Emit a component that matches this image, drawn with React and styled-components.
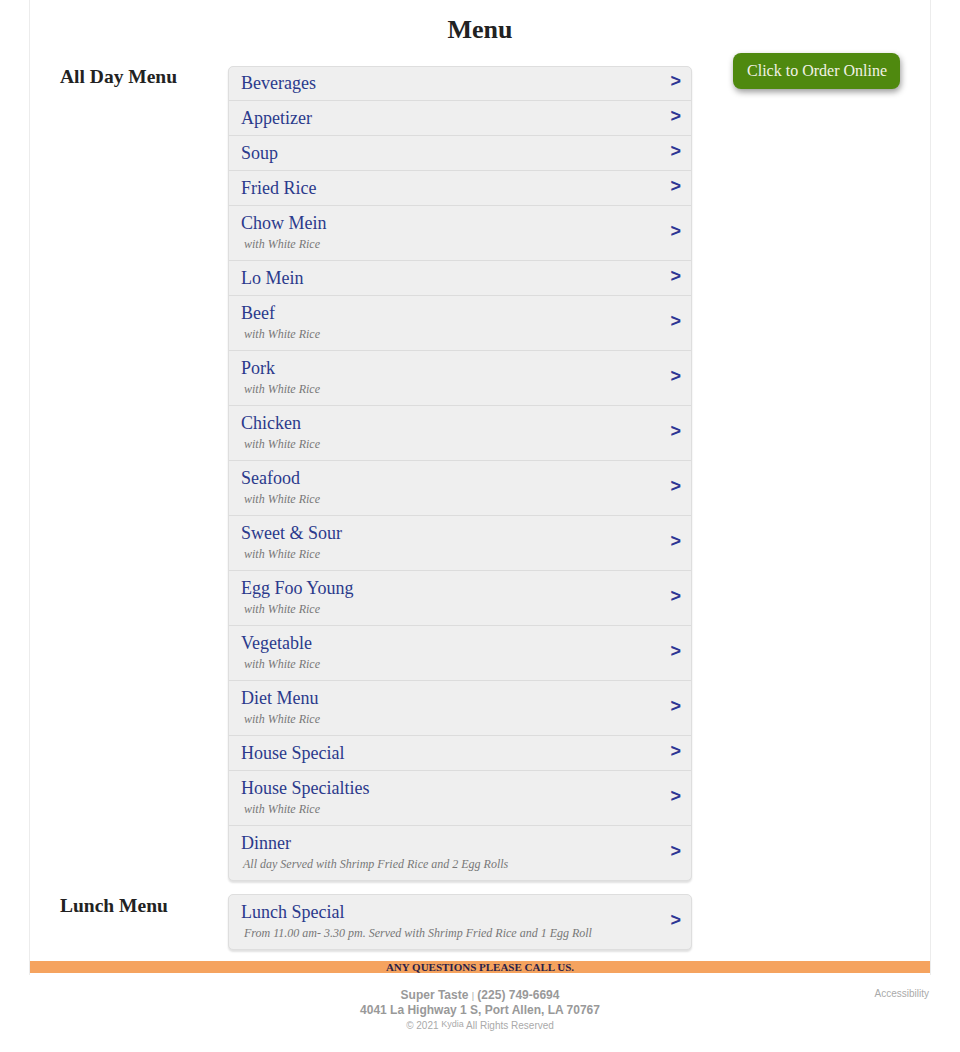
import React from 'react';
import styled, { createGlobalStyle } from 'styled-components';

const GlobalStyle = createGlobalStyle`
    body {
        margin: 0;
        background: #fff;
        font-family: "Liberation Serif", "Times New Roman", serif;
    }
`;

const Page = styled.div`
    width: 960px;
`;

const Container = styled.div`
    width: 900px;
    margin: 0 auto;
    border-left: 1px solid #ececec;
    border-right: 1px solid #ececec;
    padding-bottom: 2px;
`;

const Title = styled.h1`
    margin: 0;
    padding: 15px 0 8px;
    font-size: 26px;
    line-height: 30px;
    font-weight: bold;
    text-align: center;
    color: #222;
`;

const Section = styled.div`
    display: grid;
    grid-template-columns: 168px 464px 1fr;
    padding: 0 30px;
    margin-bottom: ${ p => p.gap || 0 }px;
`;

const Heading = styled.h2`
    margin: ${ p => p.top || 0 }px 0 0;
    font-size: 19.5px;
    line-height: 22px;
    font-weight: bold;
    color: #222;
`;

const List = styled.div`
    margin-top: ${ p => p.top || 0 }px;
    background: #efefef;
    border: 1px solid #dedede;
    border-radius: 5px;
    box-shadow: 0 2px 2px rgba(0, 0, 0, 0.12);
`;

const Row = styled.div`
    display: flex;
    align-items: center;
    padding: 7px 10px 7px 12px;
    border-top: 1px solid #dcdcdc;

    &:first-child {
        border-top: none;
        padding-top: 6px;
    }

    &:only-child {
        padding-top: 7px;
    }
`;

const RowText = styled.div`
    flex: 1;
`;

const Name = styled.div`
    font-size: 18px;
    line-height: 20px;
    color: #2b3a8c;
`;

const Sub = styled.div`
    margin: 4px 0 2px;
    padding-left: ${ p => p.indent || 3 }px;
    font-size: 12px;
    line-height: 14px;
    font-style: italic;
    color: #777;
`;

const Arrow = styled.span`
    font-family: "Liberation Sans", Arial, sans-serif;
    font-weight: bold;
    font-size: 18px;
    line-height: 20px;
    color: #2c3594;
    margin-top: -4px;
`;

const ButtonCell = styled.div`
    display: flex;
    justify-content: flex-end;
    align-items: flex-start;
`;

const OrderButton = styled.button`
    height: 36px;
    padding: 0 13px 0 14px;
    border: none;
    border-radius: 8px;
    background: #4f890f;
    color: #f2f2e6;
    font-family: "Liberation Serif", "Times New Roman", serif;
    font-size: 16px;
    box-shadow: 1px 3px 6px rgba(0, 0, 0, 0.4);
    cursor: pointer;
`;

const Bar = styled.div`
    margin-top: 11px;
    height: 12px;
    background: #f5a35f;
    text-align: center;
    font-size: 11px;
    line-height: 12px;
    font-weight: bold;
    color: #2b1f48;
`;

const Footer = styled.div`
    width: 902px;
    margin: 0 auto;
    padding-top: 13px;
    display: grid;
    grid-template-columns: 1fr auto 1fr;
    font-family: "Liberation Sans", Arial, sans-serif;
`;

const Contact = styled.div`
    grid-column: 2;
    text-align: center;
    color: #999;
`;

const Line = styled.div`
    font-size: ${ p => p.size || 12 }px;
    line-height: ${ p => p.lh || 14 }px;
    font-weight: ${ p => p.light ? 'normal' : 'bold' };
    color: ${ p => p.light ? '#aaa' : '#999' };
    margin-top: ${ p => p.top || 0 }px;
`;

const Pipe = styled.span`
    font-size: 9px;
    font-weight: normal;
    color: #aaa;
`;

const Kydia = styled.span`
    font-size: 9px;
    vertical-align: 2px;
`;

const Accessibility = styled.div`
    justify-self: end;
    padding: 0 2px 0 0;
    font-size: 10px;
    line-height: 12px;
    color: #aaa;
`;

const allDay = [
    { name: 'Beverages' },
    { name: 'Appetizer' },
    { name: 'Soup' },
    { name: 'Fried Rice' },
    { name: 'Chow Mein', sub: 'with White Rice' },
    { name: 'Lo Mein' },
    { name: 'Beef', sub: 'with White Rice' },
    { name: 'Pork', sub: 'with White Rice' },
    { name: 'Chicken', sub: 'with White Rice' },
    { name: 'Seafood', sub: 'with White Rice' },
    { name: 'Sweet & Sour', sub: 'with White Rice' },
    { name: 'Egg Foo Young', sub: 'with White Rice' },
    { name: 'Vegetable', sub: 'with White Rice' },
    { name: 'Diet Menu', sub: 'with White Rice' },
    { name: 'House Special' },
    { name: 'House Specialties', sub: 'with White Rice' },
    { name: 'Dinner', sub: 'All day Served with Shrimp Fried Rice and 2 Egg Rolls', indent: 2 },
];

const lunch = [
    { name: 'Lunch Special', sub: 'From 11.00 am- 3.30 pm. Served with Shrimp Fried Rice and 1 Egg Roll' },
];

const MenuRow = ({ item }) => (
    <Row>
        <RowText>
            <Name>{ item.name }</Name>
            { item.sub && <Sub indent={ item.indent }>{ item.sub }</Sub> }
        </RowText>
        <Arrow>&gt;</Arrow>
    </Row>
);

const App = () => {
    return (
        <Page>
            <GlobalStyle />
            <Container>
                <Title>Menu</Title>
                <Section gap={ 13 }>
                    <Heading top={ 13 }>All Day Menu</Heading>
                    <List top={ 13 }>
                        { allDay.map(item => <MenuRow key={ item.name } item={ item } />) }
                    </List>
                    <ButtonCell>
                        <OrderButton>Click to Order Online</OrderButton>
                    </ButtonCell>
                </Section>
                <Section>
                    <Heading top={ 1 }>Lunch Menu</Heading>
                    <List>
                        { lunch.map(item => <MenuRow key={ item.name } item={ item } />) }
                    </List>
                </Section>
                <Bar>ANY QUESTIONS PLEASE CALL US.</Bar>
            </Container>
            <Footer>
                <Contact>
                    <Line>Super Taste <Pipe>|</Pipe> (225) 749-6694</Line>
                    <Line>4041 La Highway 1 S, Port Allen, LA 70767</Line>
                    <Line light size={ 10 } lh={ 14 } top={ 0 }>© 2021 <Kydia>Kydia</Kydia> All Rights Reserved</Line>
                </Contact>
                <Accessibility>Accessibility</Accessibility>
            </Footer>
        </Page>
    );
};

export default App;
